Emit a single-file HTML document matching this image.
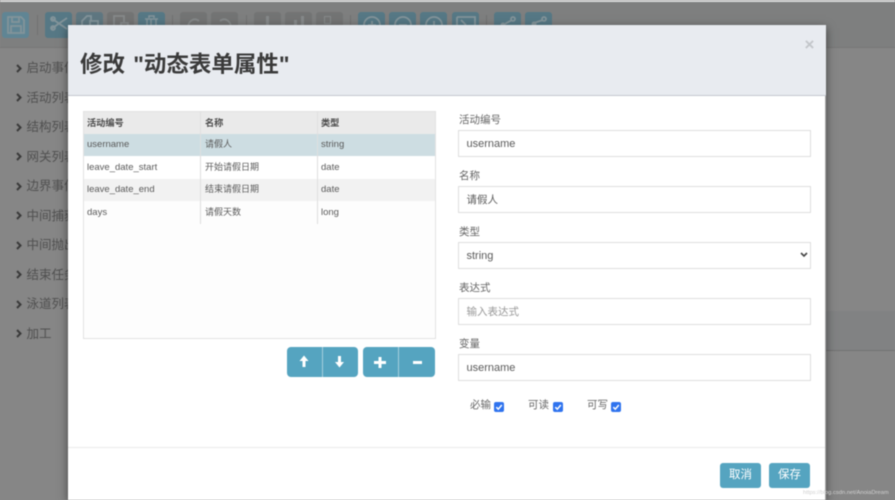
<!DOCTYPE html>
<html lang="zh"><head><meta charset="utf-8"><title>修改动态表单属性</title>
<style>
html,body{margin:0;padding:0}
body{width:895px;height:500px;overflow:hidden;background:#868686;position:relative;font-family:"Liberation Sans","Noto Sans CJK SC",sans-serif}
#w{position:absolute;left:0;top:0;width:895px;height:500px;filter:blur(.5px);overflow:hidden}
#w div,#w svg{position:absolute}
.t{border-radius:3px;top:12px;height:26px;width:27px}
.b{background:#567885}.g{background:#737474}
.sb{background:#717171;width:1px;top:15px;height:20px}
.i{fill:none;stroke:#83949a;stroke-width:1.800}
.nav{left:26.500px;font-size:12.500px;line-height:18px;color:#505050;white-space:nowrap}
.ch{left:16px;width:6px;height:9px}
.cell{font-size:9px;line-height:14px;color:#5a5a5a;white-space:nowrap}
.en{font-size:9.500px;margin-top:1px}
.hd{font-size:9.200px;font-weight:bold;color:#4a4a4a;top:115.500px}
.lb{left:459px;font-size:10.500px;line-height:14px;color:#666;margin-top:.5px}
.inp{left:458px;width:351px;height:25px;border:1.300px solid #dedede;background:#fff;color:#5a5a5a;font-size:11px;line-height:26px;text-indent:7.500px}
.zh{font-size:10.500px}
.cb{width:10px;height:10px;background:#2f73ee;border-radius:2px;top:402px}
.cbl{font-size:10.500px;line-height:14px;color:#666;top:398px}
.btn{background:#55a4c0;top:347px;height:30px}
</style></head><body><div id="w">
<div style="left:0;top:0;width:895px;height:2px;background:#d8d8d8"></div>
<div style="left:0;top:2px;width:895px;height:45px;background:#7e7f7f"></div>
<div style="left:0;top:47px;width:895px;height:1px;background:#777"></div>
<div style="left:826px;top:311px;width:69px;height:39px;background:#818283"></div>
<div style="left:826px;top:350px;width:69px;height:1px;background:#727272"></div>

<div class="t b" style="left:2px;background:#608594"></div>
<svg style="left:7px;top:16px" width="18" height="18" viewBox="0 0 18 18"><path class="i" d="M1 1h13l3 3v13H1zM5 1v5h7V1M4 17v-7h10v7"/></svg>
<div class="sb" style="left:37px"></div>
<div class="t b" style="left:45px"></div>
<svg style="left:49px;top:16px" width="20" height="16" viewBox="0 0 20 16"><path class="i" d="M2 2l16 11M18 2L2 13"/><circle class="i" cx="4" cy="3" r="2"/><circle class="i" cx="4" cy="12" r="2"/></svg>
<div class="t b" style="left:76px;background:#5f7781"></div>
<svg style="left:81px;top:14px" width="18" height="14" viewBox="0 0 18 14"><path class="i" d="M1 14V7l5-5h4v5M9 14V7h8v7"/></svg>
<div class="t g" style="left:107px"></div>
<svg style="left:112px;top:14px" width="18" height="14" viewBox="0 0 18 14"><path class="i" d="M2 14V2h10v6M9 14V9h7v5" style="stroke:#86898a"/></svg>
<div class="t b" style="left:138px"></div>
<svg style="left:144px;top:14px" width="15" height="14" viewBox="0 0 15 14"><path class="i" d="M1 5h13M3 5v9M12 5v9M7 5v9M5 4V2h5v2" style="stroke-width:1.500"/></svg>
<div class="sb" style="left:172px"></div>
<div class="t g" style="left:180px"></div>
<svg style="left:186px;top:16px" width="16" height="12" viewBox="0 0 16 12"><path class="i" d="M2 12C2 5 8 1 13 5" style="stroke:#86898a"/></svg>
<div class="t g" style="left:211px"></div>
<svg style="left:217px;top:16px" width="16" height="12" viewBox="0 0 16 12"><path class="i" d="M14 12C14 5 8 1 3 5" style="stroke:#86898a"/></svg>
<div class="sb" style="left:246px"></div>
<div class="t g" style="left:254px"></div>
<div style="left:266px;top:16px;width:3px;height:10px;background:#86898a"></div>
<div class="t g" style="left:285px"></div>
<div style="left:301px;top:16px;width:3px;height:10px;background:#86898a"></div>
<div style="left:294px;top:20px;width:3px;height:6px;background:#86898a"></div>
<div class="t g" style="left:316px"></div>
<div style="left:324px;top:16px;width:5px;height:6px;border:1px solid #86898a"></div>
<div class="sb" style="left:350px"></div>
<div class="t b" style="left:358px"></div>
<svg style="left:362px;top:15px" width="20" height="13" viewBox="0 0 20 13"><circle class="i" cx="10" cy="10" r="8"/><path class="i" d="M6 10h8M10 6v8"/></svg>
<div class="t b" style="left:389px"></div>
<svg style="left:393px;top:15px" width="20" height="13" viewBox="0 0 20 13"><circle class="i" cx="10" cy="10" r="8"/><path class="i" d="M6 10h8"/></svg>
<div class="t b" style="left:420px"></div>
<svg style="left:424px;top:15px" width="20" height="13" viewBox="0 0 20 13"><circle class="i" cx="10" cy="10" r="8"/><path class="i" d="M10 6v8"/></svg>
<div class="t b" style="left:452px"></div>
<svg style="left:456px;top:15px" width="20" height="13" viewBox="0 0 20 13"><path class="i" d="M1 2h18v11M1 2v11M5 5l5 5"/></svg>
<div class="sb" style="left:486px"></div>
<div class="t b" style="left:494px"></div>
<svg style="left:500px;top:16px" width="16" height="12" viewBox="0 0 16 12"><path class="i" d="M3 9L12 4"/><circle class="i" cx="13" cy="3" r="2"/><circle cx="3" cy="9" r="2.500" fill="#83949a"/></svg>
<div class="t b" style="left:525px"></div>
<svg style="left:531px;top:16px" width="16" height="12" viewBox="0 0 16 12"><path class="i" d="M3 7L12 4"/><circle class="i" cx="13" cy="3" r="2"/><circle cx="3" cy="8" r="2.500" fill="#83949a"/></svg>

<svg class="ch" style="top:64px" viewBox="0 0 6 9"><path d="M1 1l3.500 3.500L1 8" fill="none" stroke="#3a3a3a" stroke-width="2"/></svg><div class="nav" style="top:59px">启动事件</div>
<svg class="ch" style="top:93px" viewBox="0 0 6 9"><path d="M1 1l3.500 3.500L1 8" fill="none" stroke="#3a3a3a" stroke-width="2"/></svg><div class="nav" style="top:88.500px">活动列表</div>
<svg class="ch" style="top:123px" viewBox="0 0 6 9"><path d="M1 1l3.500 3.500L1 8" fill="none" stroke="#3a3a3a" stroke-width="2"/></svg><div class="nav" style="top:118px">结构列表</div>
<svg class="ch" style="top:152px" viewBox="0 0 6 9"><path d="M1 1l3.500 3.500L1 8" fill="none" stroke="#3a3a3a" stroke-width="2"/></svg><div class="nav" style="top:148px">网关列表</div>
<svg class="ch" style="top:182px" viewBox="0 0 6 9"><path d="M1 1l3.500 3.500L1 8" fill="none" stroke="#3a3a3a" stroke-width="2"/></svg><div class="nav" style="top:177px">边界事件</div>
<svg class="ch" style="top:211px" viewBox="0 0 6 9"><path d="M1 1l3.500 3.500L1 8" fill="none" stroke="#3a3a3a" stroke-width="2"/></svg><div class="nav" style="top:206.500px">中间捕获</div>
<svg class="ch" style="top:241px" viewBox="0 0 6 9"><path d="M1 1l3.500 3.500L1 8" fill="none" stroke="#3a3a3a" stroke-width="2"/></svg><div class="nav" style="top:236px">中间抛出</div>
<svg class="ch" style="top:270px" viewBox="0 0 6 9"><path d="M1 1l3.500 3.500L1 8" fill="none" stroke="#3a3a3a" stroke-width="2"/></svg><div class="nav" style="top:265.500px">结束任务</div>
<svg class="ch" style="top:300px" viewBox="0 0 6 9"><path d="M1 1l3.500 3.500L1 8" fill="none" stroke="#3a3a3a" stroke-width="2"/></svg><div class="nav" style="top:295px">泳道列表</div>
<svg class="ch" style="top:329px" viewBox="0 0 6 9"><path d="M1 1l3.500 3.500L1 8" fill="none" stroke="#3a3a3a" stroke-width="2"/></svg><div class="nav" style="top:325px">加工</div>

<div style="left:68px;top:25px;width:758px;height:475px;background:#fff;box-shadow:0 3px 9px rgba(0,0,0,.5);overflow:hidden;border-right:1px solid #aaa;box-sizing:border-box"></div>
<div style="left:68px;top:25px;width:758px;height:70px;background:#e8ebf0"></div>
<div style="left:68px;top:95px;width:758px;height:1px;background:#c4c8d0"></div>
<div style="left:80px;top:48.500px;font-size:22.500px;line-height:32px;font-weight:bold;color:#3a3a3a;white-space:nowrap;word-spacing:2px">修改 "动态表单属性"</div>
<div style="left:804.500px;top:35px;font-size:17px;line-height:20px;font-weight:bold;color:#c3c6ca">×</div>

<div style="left:83px;top:111px;width:353px;height:228px;border:1px solid #e2e2e2;box-sizing:border-box;background:#fdfdfd"></div>
<div style="left:84px;top:112px;width:351px;height:22px;background:#eaeaea"></div>
<div style="left:84px;top:134px;width:351px;height:22px;background:#cddde2"></div>
<div style="left:84px;top:156px;width:351px;height:23px;background:#fff"></div>
<div style="left:84px;top:179px;width:351px;height:22px;background:#f2f2f2"></div>
<div style="left:200px;top:112px;width:1px;height:112px;background:#dfdfdf"></div>
<div style="left:317px;top:112px;width:1px;height:112px;background:#dfdfdf"></div>

<div class="cell hd" style="left:87px">活动编号</div>
<div class="cell hd" style="left:205px">名称</div>
<div class="cell hd" style="left:321px">类型</div>
<div class="cell en" style="left:87px;top:137px">username</div><div class="cell" style="left:205px;top:137px">请假人</div><div class="cell en" style="left:321px;top:137px">string</div>
<div class="cell en" style="left:87px;top:160px">leave_date_start</div><div class="cell" style="left:205px;top:160px">开始请假日期</div><div class="cell en" style="left:321px;top:160px">date</div>
<div class="cell en" style="left:87px;top:182px">leave_date_end</div><div class="cell" style="left:205px;top:182px">结束请假日期</div><div class="cell en" style="left:321px;top:182px">date</div>
<div class="cell en" style="left:87px;top:205px">days</div><div class="cell" style="left:205px;top:205px">请假天数</div><div class="cell en" style="left:321px;top:205px">long</div>

<div style="left:322px;top:347px;width:1px;height:30px;background:#a6cfdd"></div>
<div style="left:398px;top:347px;width:1px;height:30px;background:#a6cfdd"></div>
<div class="btn" style="left:287px;width:35px;border-radius:4px 0 0 4px"></div>
<div class="btn" style="left:323px;width:35px;border-radius:0 4px 4px 0"></div>
<div class="btn" style="left:363px;width:35px;border-radius:4px 0 0 4px"></div>
<div class="btn" style="left:399px;width:36px;border-radius:0 4px 4px 0"></div>
<svg style="left:287px;top:347px" width="150" height="30" viewBox="0 0 150 30" fill="#fff">
<path d="M17 8.500l4.500 5.500h-3v6h-3v-6h-3z"/>
<path d="M52.500 20.500L48 15h3V9h3v6h3z"/>
<path d="M91.500 10h3v4h4.500v3h-4.500v4h-3v-4H87v-3h4.500z"/>
<path d="M126 14h9v3h-9z"/>
</svg>

<div class="lb" style="top:112px">活动编号</div>
<div class="inp" style="top:130px">username</div>
<div class="lb" style="top:168px">名称</div>
<div class="inp zh" style="top:186px">请假人</div>
<div class="lb" style="top:224px">类型</div>
<div class="inp" style="top:242px">string</div>
<svg style="left:800px;top:252px" width="8" height="6" viewBox="0 0 8 6"><path d="M1 1l3 3 3-3" fill="none" stroke="#444" stroke-width="1.600"/></svg>
<div class="lb" style="top:280px">表达式</div>
<div class="inp zh" style="top:298px;color:#999">输入表达式</div>
<div class="lb" style="top:336px">变量</div>
<div class="inp" style="top:354px">username</div>

<div class="cbl" style="left:470px">必输</div>
<div class="cb" style="left:494px"></div>
<svg style="left:494px;top:402px" width="10" height="10" viewBox="0 0 10 10"><path d="M2.300 5.200l2 2 3.500-4.200" fill="none" stroke="#fff" stroke-width="1.500"/></svg>
<div class="cbl" style="left:528px">可读</div>
<div class="cb" style="left:553px"></div>
<svg style="left:553px;top:402px" width="10" height="10" viewBox="0 0 10 10"><path d="M2.300 5.200l2 2 3.500-4.200" fill="none" stroke="#fff" stroke-width="1.500"/></svg>
<div class="cbl" style="left:587px">可写</div>
<div class="cb" style="left:611px"></div>
<svg style="left:611px;top:402px" width="10" height="10" viewBox="0 0 10 10"><path d="M2.300 5.200l2 2 3.500-4.200" fill="none" stroke="#fff" stroke-width="1.500"/></svg>

<div style="left:68px;top:447px;width:757px;height:1px;background:#eaeaea"></div>
<div style="left:720px;top:463px;width:41px;height:25px;background:#55a4c0;border-radius:3px;color:#fff;font-size:11.500px;line-height:25px;text-align:center">取消</div>
<div style="left:769px;top:463px;width:41px;height:25px;background:#55a4c0;border-radius:3px;color:#fff;font-size:11.500px;line-height:25px;text-align:center">保存</div>
<div style="left:803px;top:488px;font-size:5.800px;line-height:11px;color:#d0d0d0;white-space:nowrap">https://blog.csdn.net/AnoiaDream</div>
</div></body></html>
